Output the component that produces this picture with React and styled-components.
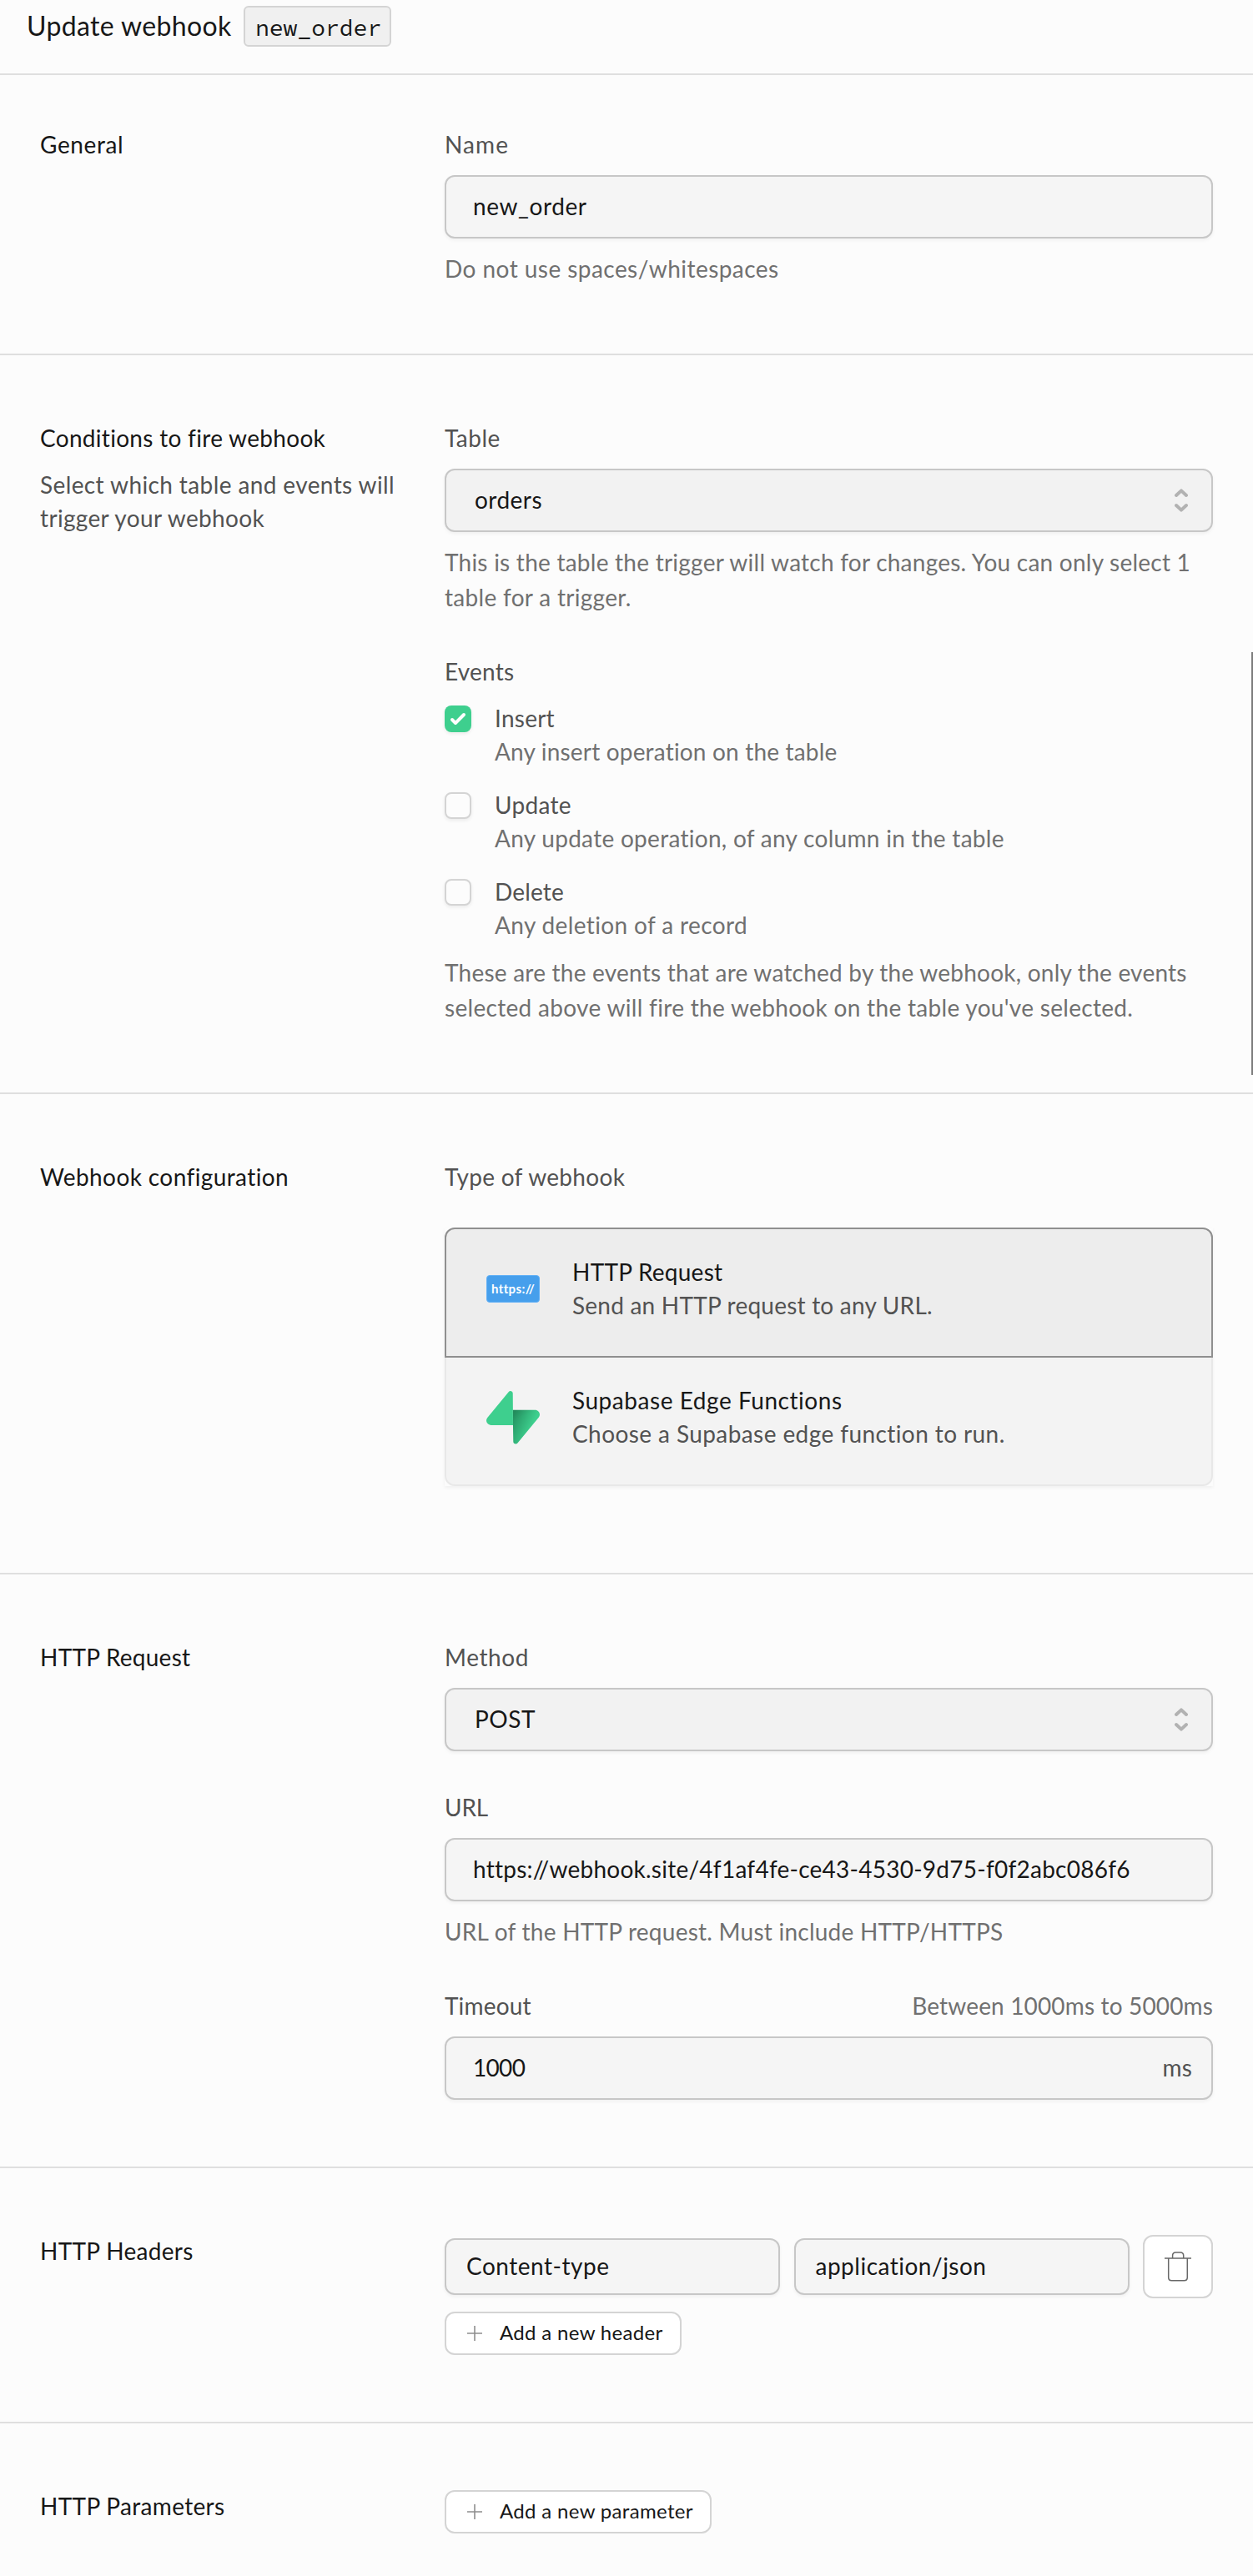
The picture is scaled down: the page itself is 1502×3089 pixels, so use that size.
import React, { useState } from "react";
import styled, { createGlobalStyle, css } from "styled-components";

const color = {
  page: "#fcfcfc",
  line: "#dfdfdf",
  ink: "#171717",
  label: "#525252",
  muted: "#707070",
  brand: "#3ecf8e",
};

const GlobalStyle = createGlobalStyle`
  *, *::before, *::after { box-sizing: border-box; }
  body {
    margin: 0;
    background: ${color.page};
    color: ${color.ink};
    font-family: Lato, "Liberation Sans", sans-serif;
    font-size: 28px;
    line-height: 40px;
    overflow: hidden;
  }
  p, h1, h2 { margin: 0; font-weight: 400; }
`;

const track = css`
  letter-spacing: ${(p) => p.$track ?? 0.25}px;
`;

const Page = styled.main`
  position: relative;
  width: 1502px;
  height: 3089px;
  overflow: hidden;
`;

const Header = styled.header`
  display: flex;
  align-items: flex-start;
  height: 90px;
  padding: 7px 0 0 32px;
  border-bottom: 2px solid ${color.line};
`;

const Title = styled.h1`
  width: 260px;
  padding-top: 4px;
  font-size: 32px;
  white-space: nowrap;
  letter-spacing: 0.36px;
`;

const NamePill = styled.code`
  height: 49px;
  width: 177px;
  padding: 4px 0 0 12px;
  border: 2px solid #d4d4d4;
  border-radius: 6px;
  background: #f0f0f0;
  font: 28px/40px "Source Code Pro", "Liberation Mono", monospace;
`;

const Section = styled.section`
  display: grid;
  grid-template-columns: 485px 921px;
  padding: ${(p) => p.$top ?? 79}px 48px ${(p) => p.$bottom ?? 80}px;
  border-bottom: 2px solid ${color.line};
  &:last-of-type { border-bottom: none; }
`;

const SectionTitle = styled.h2`
  font-size: 28px;
  white-space: nowrap;
  ${track}
`;

const SectionNote = styled.p`
  margin-top: 16px;
  color: ${color.label};
  white-space: nowrap;
`;

const Line = styled.span`
  display: block;
  white-space: nowrap;
  ${track}
`;

const Fields = styled.div`
  display: flex;
  flex-direction: column;
`;

const Field = styled.div`
  margin-top: ${(p) => p.$gap ?? 0}px;
`;

const LabelRow = styled.div`
  display: flex;
  justify-content: space-between;
  margin-bottom: ${(p) => p.$space ?? 17}px;
`;

const Label = styled.span`
  color: ${color.label};
  white-space: nowrap;
  ${track}
`;

const Aside = styled(Label)`
  color: ${color.muted};
`;

const Control = styled.div`
  display: flex;
  align-items: center;
  justify-content: space-between;
  width: ${(p) => (p.$compact ? "402px" : "100%")};
  height: ${(p) => (p.$compact ? 68 : 76)}px;
  padding: 0 ${(p) => (p.$select ? 28 : 23)}px 2px ${(p) => (p.$compact ? 24 : p.$select ? 34 : 32)}px;
  border: 2px solid #c7c7c7;
  border-radius: 12px;
  background: ${(p) => (p.$select ? "#f2f2f2" : "#f5f5f5")};
  box-shadow: 0 2px 4px rgba(0, 0, 0, 0.05);
`;

const Value = styled.span`
  white-space: nowrap;
  ${track}
`;

const Chevrons = styled.svg`
  width: 16px;
  height: 28px;
  margin-top: 2px;
`;

const Help = styled.p`
  margin-top: ${(p) => p.$gap ?? 15}px;
  color: ${color.muted};
  line-height: 42px;
`;

const Events = styled.div`
  display: flex;
  flex-direction: column;
  gap: 24px;
`;

const EventRow = styled.div`
  display: flex;
  gap: 28px;
  align-items: flex-start;
`;

const Checkbox = styled.button`
  display: flex;
  width: 32px;
  height: 32px;
  margin: 5px 0 0;
  padding: 0;
  border: ${(p) => (p.$on ? "none" : "2px solid #d4d4d4")};
  border-radius: 8px;
  background: ${(p) => (p.$on ? color.brand : color.page)};
  box-shadow: 0 2px 4px rgba(0, 0, 0, 0.07);
`;

const EventName = styled(Line)`
  color: ${color.label};
`;

const EventNote = styled(Line)`
  color: ${color.muted};
`;

const Options = styled.div`
  box-shadow: 0 2px 4px rgba(0, 0, 0, 0.05);
`;

const Option = styled.div`
  position: relative;
  z-index: ${(p) => (p.$selected ? 1 : 0)};
  display: flex;
  height: 156px;
  padding: 31px 48px 0;
  border: 2px solid ${(p) => (p.$selected ? "#8f8f8f" : "#e8e8e8")};
  background: ${(p) => (p.$selected ? "#ededed" : "#f3f3f3")};
  &:first-child { border-radius: 12px 12px 0 0; }
  &:last-child {
    margin-top: -2px;
    border-radius: 0 0 12px 12px;
  }
`;

const OptionIcon = styled.div`
  display: flex;
  align-items: center;
  width: 64px;
  height: 64px;
  margin: 9px 39px 0 0;
`;

const HttpsBadge = styled.span`
  display: block;
  width: 64px;
  height: 33px;
  margin-bottom: 1px;
  border: 1px solid #62b0f6;
  border-radius: 4px;
  background: #469fec;
  color: #fff;
  font-size: 15px;
  font-weight: 700;
  line-height: 31px;
  text-align: center;
  letter-spacing: 0.4px;
`;

const OptionNote = styled(Line)`
  color: ${color.label};
`;

const HeaderRow = styled.div`
  display: flex;
  align-items: center;
  justify-content: space-between;
  margin: 1px 0 16px;
`;

const IconButton = styled.button`
  display: flex;
  align-items: center;
  justify-content: center;
  width: 84px;
  height: 76px;
  padding: 0;
  border: 2px solid #d4d4d4;
  border-radius: 12px;
  background: #fff;
`;

const AddButton = styled.button`
  display: flex;
  align-items: center;
  align-self: flex-start;
  width: ${(p) => p.$width}px;
  height: 52px;
  margin-top: ${(p) => p.$offset ?? 0}px;
  padding: 0 0 0 25px;
  border: 2px solid #d4d4d4;
  border-radius: 12px;
  background: #fff;
  color: ${color.ink};
  font: 24px/32px Lato, "Liberation Sans", sans-serif;
  white-space: nowrap;
  letter-spacing: 0.33px;
`;

const AddText = styled.span`
  margin-left: 21px;
  padding-bottom: 3px;
`;

const ScrollThumb = styled.div`
  position: absolute;
  top: 782px;
  right: 0;
  width: 2px;
  height: 507px;
  background: #7d7d7d;
`;

const UpDown = () => (
  <Chevrons viewBox="0 0 16 28" fill="none" stroke="#b2b2b2" strokeWidth="4" strokeLinecap="round" strokeLinejoin="round">
    <path d="M2 8 8 2.4 14 8M2 20 8 25.6 14 20" />
  </Chevrons>
);

const Check = () => (
  <svg width="32" height="32" viewBox="0 0 16 16" fill="#fff">
    <path d="M12.207 4.793a1 1 0 010 1.414l-5 5a1 1 0 01-1.414 0l-2-2a1 1 0 011.414-1.414L6.5 9.086l4.293-4.293a1 1 0 011.414 0z" />
  </svg>
);

const Bolt = () => (
  <svg width="64" height="64" viewBox="0 0 109 113" preserveAspectRatio="none">
    <defs>
      <linearGradient id="boltBase" x1="53.97" y1="54.97" x2="94.16" y2="71.83" gradientUnits="userSpaceOnUse">
        <stop stopColor="#249361" />
        <stop offset="1" stopColor="#3ecf8e" />
      </linearGradient>
      <linearGradient id="boltShade" x1="36.16" y1="30.58" x2="54.48" y2="65.08" gradientUnits="userSpaceOnUse">
        <stop stopOpacity="0.6" />
        <stop offset="1" stopOpacity="0" />
      </linearGradient>
    </defs>
    <path d="M63.708 110.284C60.848 113.885 55.05 111.912 54.981 107.314L53.974 40.063H99.194C107.384 40.063 111.952 49.523 106.859 55.937L63.708 110.284Z" fill="url(#boltBase)" />
    <path d="M63.708 110.284C60.848 113.885 55.05 111.912 54.981 107.314L53.974 40.063H99.194C107.384 40.063 111.952 49.523 106.859 55.937L63.708 110.284Z" fill="url(#boltShade)" fillOpacity="0.2" />
    <path d="M45.317 2.071C48.177-1.53 53.975.443 54.043 5.041L54.485 72.292H9.831C1.64 72.292-2.928 62.832 2.166 56.418L45.317 2.071Z" fill="#3ecf8e" />
  </svg>
);

const Trash = () => (
  <svg width="32" height="36" viewBox="0 0 32 36" fill="none" stroke="#686868" strokeWidth="1.5">
    <path d="M0 8H32M4.7 8V31Q4.7 34.8 8.5 34.8H23.5Q27.3 34.8 27.3 31V8M9.6 8V4.8Q9.6 1 13.4 1H18.9Q22.7 1 22.7 4.8V8" />
  </svg>
);

const Plus = () => (
  <svg width="18" height="18" viewBox="0 0 18 18" stroke="#8f8f8f" strokeWidth="1.6">
    <path d="M9 0V18M0 9H18" />
  </svg>
);

const eventList = [
  { name: "Insert", nameTrack: 0.25, note: "Any insert operation on the table", noteTrack: 0.18 },
  { name: "Update", nameTrack: 0.31, note: "Any update operation, of any column in the table", noteTrack: 0.29 },
  { name: "Delete", nameTrack: 0.15, note: "Any deletion of a record", noteTrack: 0.37 },
];

export default function App() {
  const [checked, setChecked] = useState({ Insert: true });
  const toggle = (name) => setChecked((c) => ({ ...c, [name]: !c[name] }));

  return (
    <Page>
      <GlobalStyle />
      <Header>
        <Title>Update webhook</Title>
        <NamePill>new_order</NamePill>
      </Header>

      <Section $top={63} $bottom={81}>
        <SectionTitle $track={0.6}>General</SectionTitle>
        <Field>
          <LabelRow><Label $track={1.1}>Name</Label></LabelRow>
          <Control><Value $track={0.59}>new_order</Value></Control>
          <Help><Line $track={0.45}>Do not use spaces/whitespaces</Line></Help>
        </Field>
      </Section>

      <Section $bottom={81}>
        <div>
          <SectionTitle $track={0.3}>Conditions to fire webhook</SectionTitle>
          <SectionNote>
            <Line $track={0.39}>Select which table and events will</Line>
            <Line $track={0.34}>trigger your webhook</Line>
          </SectionNote>
        </div>
        <Fields>
          <Field>
            <LabelRow><Label $track={0.49}>Table</Label></LabelRow>
            <Control $select><Value $track={0.46}>orders</Value><UpDown /></Control>
            <Help>
              <Line $track={0.24}>This is the table the trigger will watch for changes. You can only select 1</Line>
              <Line $track={0.3}>table for a trigger.</Line>
            </Help>
          </Field>
          <Field $gap={48}>
            <LabelRow $space={16}><Label $track={0.23}>Events</Label></LabelRow>
            <Events>
              {eventList.map((e) => (
                <EventRow key={e.name}>
                  <Checkbox $on={checked[e.name]} aria-label={e.name} onClick={() => toggle(e.name)}>
                    {checked[e.name] && <Check />}
                  </Checkbox>
                  <div>
                    <EventName $track={e.nameTrack}>{e.name}</EventName>
                    <EventNote $track={e.noteTrack}>{e.note}</EventNote>
                  </div>
                </EventRow>
              ))}
            </Events>
            <Help $gap={16}>
              <Line $track={0.23}>These are the events that are watched by the webhook, only the events</Line>
              <Line $track={0.31}>selected above will fire the webhook on the table you've selected.</Line>
            </Help>
          </Field>
        </Fields>
      </Section>

      <Section $bottom={104}>
        <SectionTitle $track={0.4}>Webhook configuration</SectionTitle>
        <Field>
          <LabelRow $space={41}><Label $track={0.31}>Type of webhook</Label></LabelRow>
          <Options>
            <Option $selected>
              <OptionIcon><HttpsBadge>https://</HttpsBadge></OptionIcon>
              <div>
                <Line $track={0.25}>HTTP Request</Line>
                <OptionNote $track={0.22}>Send an HTTP request to any URL.</OptionNote>
              </div>
            </Option>
            <Option>
              <OptionIcon><Bolt /></OptionIcon>
              <div>
                <Line $track={0.54}>Supabase Edge Functions</Line>
                <OptionNote $track={0.41}>Choose a Supabase edge function to run.</OptionNote>
              </div>
            </Option>
          </Options>
        </Field>
      </Section>

      <Section>
        <SectionTitle $track={0.25}>HTTP Request</SectionTitle>
        <Fields>
          <Field>
            <LabelRow><Label $track={0.6}>Method</Label></LabelRow>
            <Control $select><Value $track={0.53}>POST</Value><UpDown /></Control>
          </Field>
          <Field $gap={47}>
            <LabelRow><Label $track={-0.17}>URL</Label></LabelRow>
            <Control><Value $track={0.25}>https://webhook.site/4f1af4fe-ce43-4530-9d75-f0f2abc086f6</Value></Control>
            <Help><Line $track={0.24}>URL of the HTTP request. Must include HTTP/HTTPS</Line></Help>
          </Field>
          <Field $gap={48}>
            <LabelRow>
              <Label $track={0.17}>Timeout</Label>
              <Aside $track={0.15}>Between 1000ms to 5000ms</Aside>
            </LabelRow>
            <Control><Value $track={-0.68}>1000</Value><Label $track={0.2}>ms</Label></Control>
          </Field>
        </Fields>
      </Section>

      <Section>
        <SectionTitle $track={0.3}>HTTP Headers</SectionTitle>
        <Fields>
          <HeaderRow>
            <Control $compact><Value $track={0.52}>Content-type</Value></Control>
            <Control $compact><Value $track={0.5}>application/json</Value></Control>
            <IconButton aria-label="Remove header"><Trash /></IconButton>
          </HeaderRow>
          <AddButton $width={284}><Plus /><AddText>Add a new header</AddText></AddButton>
        </Fields>
      </Section>

      <Section>
        <SectionTitle $track={0.33}>HTTP Parameters</SectionTitle>
        <Fields>
          <AddButton $width={320} $offset={1}><Plus /><AddText>Add a new parameter</AddText></AddButton>
        </Fields>
      </Section>
      <ScrollThumb />
    </Page>
  );
}
